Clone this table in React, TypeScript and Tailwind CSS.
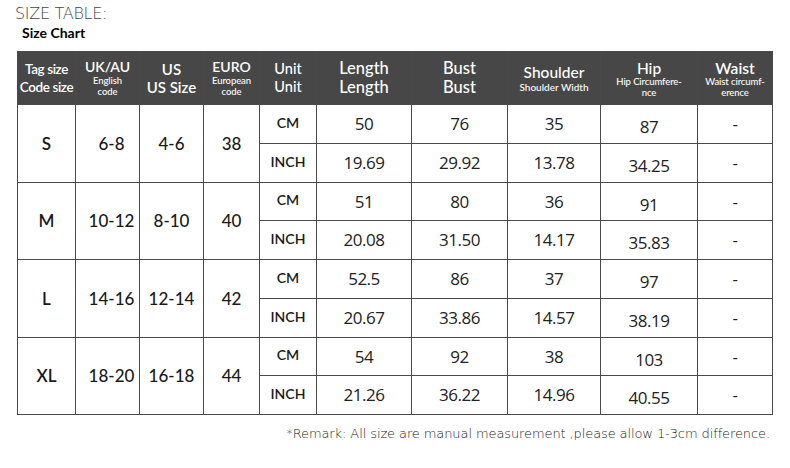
import React from "react";

type Row = {
  tag: string;
  uk: string;
  us: string;
  euro: string;
  cm: string[];
  inch: string[];
};

const rows: Row[] = [
  { tag: "S", uk: "6-8", us: "4-6", euro: "38", cm: ["50", "76", "35", "87", "-"], inch: ["19.69", "29.92", "13.78", "34.25", "-"] },
  { tag: "M", uk: "10-12", us: "8-10", euro: "40", cm: ["51", "80", "36", "91", "-"], inch: ["20.08", "31.50", "14.17", "35.83", "-"] },
  { tag: "L", uk: "14-16", us: "12-14", euro: "42", cm: ["52.5", "86", "37", "97", "-"], inch: ["20.67", "33.86", "14.57", "38.19", "-"] },
  { tag: "XL", uk: "18-20", us: "16-18", euro: "44", cm: ["54", "92", "38", "103", "-"], inch: ["21.26", "36.22", "14.96", "40.55", "-"] },
];

const widths = [58, 64, 64, 56, 57, 95, 96, 93, 97, 75];

const cell = "border border-[#4a4a4a] p-0 text-center align-middle";
const head =
  "border border-[#4a4a4a] bg-[#474747] p-0 text-center align-middle text-white leading-[18px] whitespace-nowrap";

function Sub({ children }: { children: React.ReactNode }) {
  return <div className="text-[9.5px] leading-[11px] font-medium tracking-[-0.1px]">{children}</div>;
}

export default function App() {
  return (
    <div className="w-[790px] h-[468px] bg-white relative font-['Lato',sans-serif] text-[#1a1a1a]">
      <div className="pt-[4px] pl-[15px] text-[16px] leading-[20px] text-[#444] font-extralight font-['DejaVu_Sans',sans-serif] tracking-[-0.3px]">
        SIZE TABLE:
      </div>
      <div className="pl-[22px] text-[14px] leading-[18px] font-bold text-black">Size Chart</div>

      <table className="mt-[9px] ml-[17px] border-collapse table-fixed w-[755px]">
        <colgroup>
          {widths.map((w, i) => (
            <col key={i} style={{ width: w }} />
          ))}
        </colgroup>
        <thead>
          <tr className="h-[53px]">
            <th className={head + " font-semibold text-[13.5px] tracking-[-0.4px]"}>
              <div>Tag size</div>
              <div>Code size</div>
            </th>
            <th className={head + " font-semibold text-[14px]"}>
              <div className="leading-[16px]">UK/AU</div>
              <Sub>English</Sub>
              <Sub>code</Sub>
            </th>
            <th className={head + " font-semibold text-[15px]"}>
              <div>US</div>
              <div>US Size</div>
            </th>
            <th className={head + " font-semibold text-[14px]"}>
              <div className="leading-[16px]">EURO</div>
              <Sub>European</Sub>
              <Sub>code</Sub>
            </th>
            <th className={head + " font-medium text-[14.5px]"}>
              <div>Unit</div>
              <div>Unit</div>
            </th>
            <th className={head + " font-medium text-[16.5px] leading-[19px]"}>
              <div>Length</div>
              <div>Length</div>
            </th>
            <th className={head + " font-medium text-[16.5px] leading-[19px]"}>
              <div>Bust</div>
              <div>Bust</div>
            </th>
            <th className={head + " font-medium text-[15.5px]"}>
              <div>Shoulder</div>
              <div className="text-[10px] leading-[12px] font-medium">Shoulder Width</div>
            </th>
            <th className={head + " font-medium text-[15.5px]"}>
              <div className="pt-[2px] leading-[16px]">Hip</div>
              <Sub>Hip Circumfere-</Sub>
              <Sub>nce</Sub>
            </th>
            <th className={head + " font-semibold text-[15.5px]"}>
              <div className="pt-[2px] leading-[16px]">Waist</div>
              <Sub>Waist circumf-</Sub>
              <Sub>erence</Sub>
            </th>
          </tr>
        </thead>
        <tbody>
          {rows.map((r) =>
            [0, 1].map((k) => (
              <tr key={r.tag + k} className="h-[38.75px]">
                {k === 0 && (
                  <>
                    <td rowSpan={2} className={cell + " text-[17px] font-semibold"}>{r.tag}</td>
                    <td rowSpan={2} className={cell + " text-[17px] font-medium pl-[8px]"}>{r.uk}</td>
                    <td rowSpan={2} className={cell + " text-[17px] font-medium"}>{r.us}</td>
                    <td rowSpan={2} className={cell + " text-[17px] font-medium"}>{r.euro}</td>
                  </>
                )}
                <td className={cell + " text-[14px] font-semibold pb-[3px]"}>{k === 0 ? "CM" : "INCH"}</td>
                {(k === 0 ? r.cm : r.inch).map((v, i) => (
                  <td
                    key={i}
                    className={
                      cell +
                      " font-['Open_Sans',sans-serif] text-[17px] font-normal tracking-[-0.5px] text-[#222]" +
                      (i === 3 ? " pt-[6px]" : "")
                    }
                  >
                    {v}
                  </td>
                ))}
              </tr>
            ))
          )}
        </tbody>
      </table>

      <div className="mt-[11px] pr-[20px] text-right text-[13px] leading-[16px] text-[#222] font-['DejaVu_Sans',sans-serif] font-extralight tracking-[-0.1px]">
        *Remark: All size are manual measurement ,please allow 1-3cm difference.
      </div>
    </div>
  );
}
